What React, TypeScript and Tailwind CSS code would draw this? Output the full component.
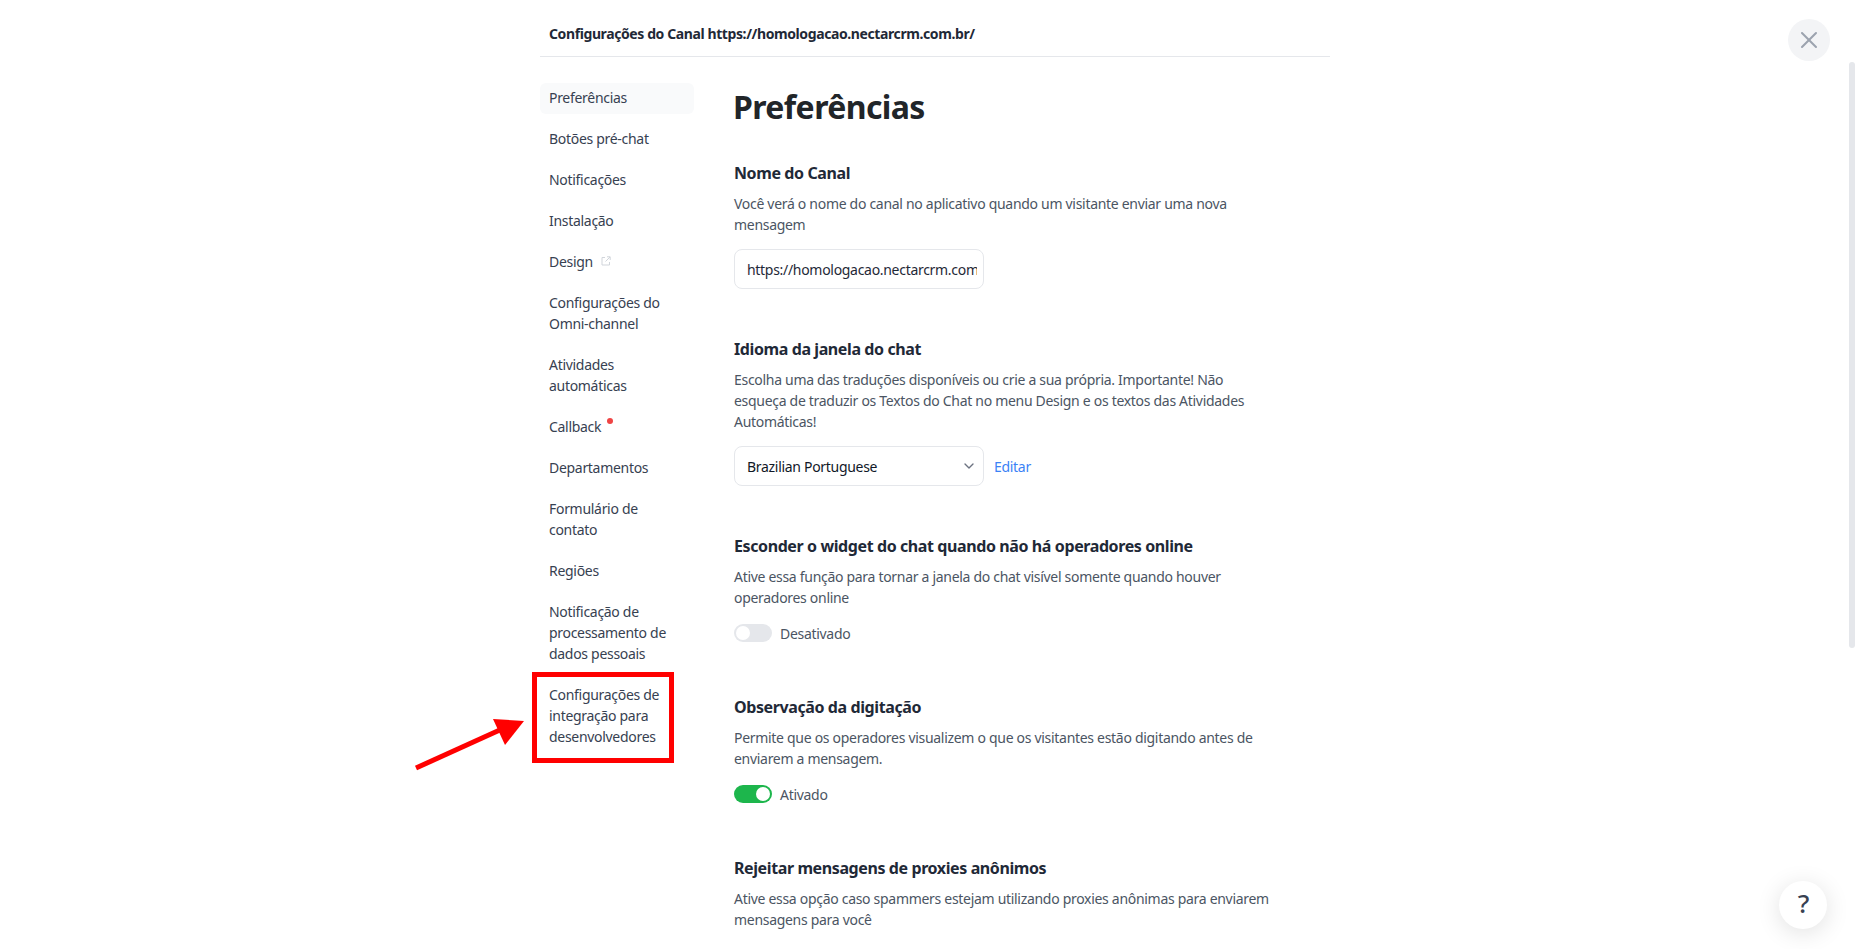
import React from "react";
import { ChevronDown, X } from "lucide-react";

type MenuItem = {
  label: string;
  active?: boolean;
  external?: boolean;
  dot?: boolean;
};

const menu: MenuItem[] = [
  { label: "Preferências", active: true },
  { label: "Botões pré-chat" },
  { label: "Notificações" },
  { label: "Instalação" },
  { label: "Design", external: true },
  { label: "Configurações do Omni-channel" },
  { label: "Atividades automáticas" },
  { label: "Callback", dot: true },
  { label: "Departamentos" },
  { label: "Formulário de contato" },
  { label: "Regiões" },
  { label: "Notificação de processamento de dados pessoais" },
  { label: "Configurações de integração para desenvolvedores" },
];

const Toggle = ({ on, label }: { on: boolean; label: string }) => (
  <div className="flex items-center gap-2 h-[21px] pt-px">
    {on ? (
      <span className="flex justify-end items-center w-[38px] h-[18px] rounded-full bg-[#1db64c] px-[2px]">
        <span className="w-[14px] h-[14px] rounded-full bg-white" />
      </span>
    ) : (
      <span className="flex items-center w-[38px] h-[18px] rounded-full bg-[#e5e7eb] px-[2px]">
        <span className="w-[14px] h-[14px] rounded-full bg-white" />
      </span>
    )}
    <span className="text-[14px] leading-[21px] text-[#4b5563]">{label}</span>
  </div>
);

const Section = ({ title, desc, children }: { title: string; desc: string; children?: React.ReactNode }) => (
  <section className="w-[540px]">
    <h2 className="text-[16px] leading-[24px] font-bold text-[#1f2937] tracking-[-0.4px]">{title}</h2>
    <p className="mt-[8px] text-[14px] leading-[21px] text-[#4b5563]">{desc}</p>
    {children}
  </section>
);

export default function App() {
  return (
    <div className="relative h-screen overflow-hidden bg-white font-['Noto_Sans',sans-serif] tracking-[-0.3px]">
      <div className="ml-[540px] w-[790px]">
        <header className="h-[57px] pt-[23px] pl-[9px] border-b border-[#e5e7eb] text-[14px] leading-[21px] font-bold text-[#1f2937] tracking-[-0.4px]">
          Configurações do Canal https://homologacao.nectarcrm.com.br/
        </header>
        <div className="flex pt-[26px]">
          <nav className="w-[154px] shrink-0 flex flex-col gap-[10px]">
            {menu.map((item) => (
              <a
                key={item.label}
                className={
                  item.active
                    ? "block rounded-md bg-[#f9fafb] px-[9px] pt-[4px] pb-[6px] text-[14px] leading-[21px] text-[#374151]"
                    : "block rounded-md px-[9px] pt-[4px] pb-[6px] text-[14px] leading-[21px] text-[#374151]"
                }
              >
                {item.label}
                {item.external && (
                  <svg className="inline-block ml-[8px] mb-[5px] w-[10px] h-[10px] text-[#d1d5db]" viewBox="0 0 10 10" fill="none" stroke="currentColor" strokeWidth="1">
                    <path d="M4 1.5H1v7.5h7.5V6M6 .8h3.2V4M9 1 4.5 5.5" />
                  </svg>
                )}
                {item.dot && <span className="inline-block ml-[6px] mb-[8px] w-[6px] h-[6px] rounded-full bg-[#ef4444]" />}
              </a>
            ))}
          </nav>
          <main className="ml-[40px] flex-1">
            <h1 className="text-[32px] leading-[48px] font-bold text-[#212529] -ml-[1px] tracking-[-0.6px]">Preferências</h1>
            <div className="mt-[30px] flex flex-col gap-[48px]">
              <Section title="Nome do Canal" desc="Você verá o nome do canal no aplicativo quando um visitante enviar uma nova mensagem">
                <input
                  readOnly
                  value="https://homologacao.nectarcrm.com.br/"
                  className="mt-[14px] block w-[250px] h-[40px] rounded-lg border border-[#e5e7eb] pl-[12px] pr-[6px] text-[14px] text-[#1f2937] outline-none"
                />
              </Section>
              <Section title="Idioma da janela do chat" desc="Escolha uma das traduções disponíveis ou crie a sua própria. Importante! Não esqueça de traduzir os Textos do Chat no menu Design e os textos das Atividades Automáticas!">
                <div className="mt-[14px] flex items-center gap-[10px]">
                  <div className="w-[250px] h-[40px] rounded-lg border border-[#e5e7eb] pl-[12px] pr-[6px] flex items-center justify-between">
                    <span className="text-[14px] text-[#111827]">Brazilian Portuguese</span>
                    <ChevronDown className="w-[16px] h-[16px] text-[#6b7280]" />
                  </div>
                  <a className="text-[14px] text-[#3b82f6]">Editar</a>
                </div>
              </Section>
              <Section title="Esconder o widget do chat quando não há operadores online" desc="Ative essa função para tornar a janela do chat visível somente quando houver operadores online">
                <div className="mt-[14px] pb-[4px]">
                  <Toggle on={false} label="Desativado" />
                </div>
              </Section>
              <Section title="Observação da digitação" desc="Permite que os operadores visualizem o que os visitantes estão digitando antes de enviarem a mensagem.">
                <div className="mt-[14px] pb-[4px]">
                  <Toggle on label="Ativado" />
                </div>
              </Section>
              <Section title="Rejeitar mensagens de proxies anônimos" desc="Ative essa opção caso spammers estejam utilizando proxies anônimas para enviarem mensagens para você" />
            </div>
          </main>
        </div>
      </div>

      {/* scrollbar thumb */}
      <div className="absolute top-[62px] right-[2px] w-[6px] h-[586px] rounded-full bg-[#e5e7eb]" />

      <button className="absolute top-[19px] right-[27px] w-[42px] h-[42px] rounded-full bg-[#f3f4f6] flex items-center justify-center text-[#9ca3af]">
        <X className="w-[28px] h-[28px]" strokeWidth={1.75} />
      </button>

      <button className="absolute bottom-[20px] right-[30px] w-[48px] h-[48px] rounded-full bg-white shadow-[0_4px_24px_rgba(0,0,0,0.12)] flex items-center justify-center pb-[3px] pl-px text-[26px] font-medium text-[#374151]">
        ?
      </button>

      {/* annotation */}
      <div className="absolute left-[532px] top-[672px] w-[142px] h-[91px] border-[5px] border-[#ff0000]" />
      <svg className="absolute left-[410px] top-[710px] w-[120px] h-[70px]" viewBox="0 0 120 70">
        <path d="M6 58 L 92 19" stroke="#ff0000" strokeWidth="5" fill="none" />
        <path d="M83 9 L114 11 L95 35 Z" fill="#ff0000" />
      </svg>
    </div>
  );
}
